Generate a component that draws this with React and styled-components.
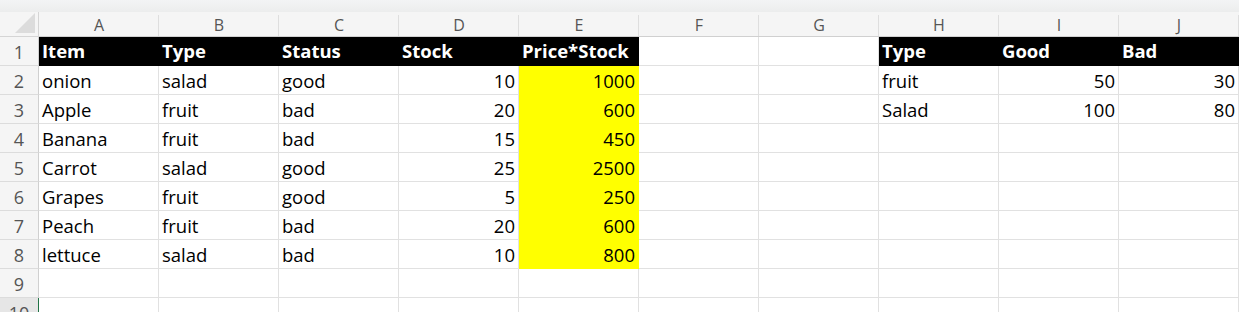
import React from "react";
import styled, { createGlobalStyle } from "styled-components";

const Global = createGlobalStyle`
  html, body { margin: 0; padding: 0; background: #ffffff; overflow: hidden; }
  body { font-family: "Open Sans", "Noto Sans", sans-serif; }
`;

const Page = styled.div`
  width: 1239px;
  height: 312px;
  overflow: hidden;
  display: flex;
  flex-direction: column;
  background: #fff;
`;

const TopBand = styled.div`
  height: 12px;
  flex: none;
  background: linear-gradient(#f3f4f5, #eceded);
`;

const Sheet = styled.div`
  display: grid;
  grid-template-columns: 39px repeat(10, 120px);
  grid-auto-rows: 29px;
  grid-template-rows: 25px;
`;

const Corner = styled.div`
  background: #f5f5f5;
  border-right: 1px solid #d5d5d5;
  border-bottom: 1px solid #d5d5d5;
  box-sizing: border-box;
  position: relative;
  &::after {
    content: "";
    position: absolute;
    right: 3px;
    bottom: 3px;
    width: 0;
    height: 0;
    border-left: 20px solid transparent;
    border-bottom: 20px solid #dcdcdc;
  }
`;

const ColHeader = styled.div`
  background: #f5f5f5;
  border-bottom: 1px solid #d0d0d0;
  box-sizing: border-box;
  display: flex;
  align-items: center;
  justify-content: center;
  font-size: 16px;
  color: #555;
  position: relative;
  padding-top: 1px;
  &::after {
    content: "";
    position: absolute;
    right: 0;
    top: 3px;
    bottom: 0;
    width: 1px;
    background: #dedede;
  }
`;

const RowHeader = styled.div`
  background: ${(p) => (p.$active ? "#e6e6e6" : "#f5f5f5")};
  border-right: 1px solid ${(p) => (p.$active ? "#217346" : "#d0d0d0")};
  border-bottom: 1px solid #dcdcdc;
  box-sizing: border-box;
  display: flex;
  align-items: center;
  justify-content: center;
  font-size: 18px;
  color: #555;
  padding-top: 1px;
`;

const fills = {
  black: "#000000",
  yellow: "#ffff00",
};

const Cell = styled.div`
  box-sizing: border-box;
  background: ${(p) => (p.$fill ? fills[p.$fill] : "#fff")};
  border-right: 1px solid ${(p) => (p.$fill ? fills[p.$fill] : "#e1e1e1")};
  border-bottom: 1px solid ${(p) => (p.$fill ? fills[p.$fill] : "#e1e1e1")};
  display: flex;
  align-items: flex-end;
  justify-content: ${(p) => (p.$num ? "flex-end" : "flex-start")};
  padding: 0 3px ${(p) => (p.$head ? "3px" : "2px")} 3px;
  font-size: 18.5px;
  line-height: 22px;
  font-weight: ${(p) => (p.$head ? 700 : 400)};
  color: ${(p) => (p.$fill === "black" ? "#fff" : "#000")};
  white-space: nowrap;
  overflow: hidden;
`;

const cols = ["A", "B", "C", "D", "E", "F", "G", "H", "I", "J"];

const rows = [
  ["Item", "Type", "Status", "Stock", "Price*Stock", "", "", "Type", "Good", "Bad"],
  ["onion", "salad", "good", 10, 1000, "", "", "fruit", 50, 30],
  ["Apple", "fruit", "bad", 20, 600, "", "", "Salad", 100, 80],
  ["Banana", "fruit", "bad", 15, 450, "", "", "", "", ""],
  ["Carrot", "salad", "good", 25, 2500, "", "", "", "", ""],
  ["Grapes", "fruit", "good", 5, 250, "", "", "", "", ""],
  ["Peach", "fruit", "bad", 20, 600, "", "", "", "", ""],
  ["lettuce", "salad", "bad", 10, 800, "", "", "", "", ""],
  ["", "", "", "", "", "", "", "", "", ""],
  ["", "", "", "", "", "", "", "", "", ""],
];

function fillFor(r, c) {
  if (r === 0 && c !== 5 && c !== 6) return "black";
  if (c === 4 && r >= 1 && r <= 7) return "yellow";
  return undefined;
}

export default function App() {
  return (
    <Page>
      <Global />
      <TopBand />
      <Sheet>
        <Corner />
        {cols.map((c) => (
          <ColHeader key={c}>{c}</ColHeader>
        ))}
        {rows.map((row, r) => (
          <React.Fragment key={r}>
            <RowHeader $active={r === 9}>{r + 1}</RowHeader>
            {row.map((v, c) => (
              <Cell
                key={c}
                $fill={fillFor(r, c)}
                $num={typeof v === "number"}
                $head={r === 0}
              >
                {v}
              </Cell>
            ))}
          </React.Fragment>
        ))}
      </Sheet>
    </Page>
  );
}
